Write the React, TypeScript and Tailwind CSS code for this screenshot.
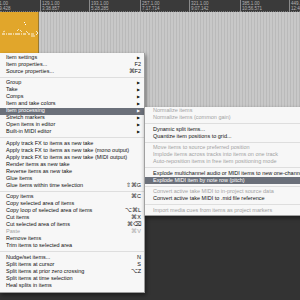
type Row =
  | { label: string; keys?: string; sub?: boolean; off?: boolean; hl?: boolean }
  | "sep";

const MAIN_ITEMS: Row[] = [
  { label: "Item settings", sub: true },
  { label: "Item properties...", keys: "F2" },
  { label: "Source properties...", keys: "⌘F2" },
  "sep",
  { label: "Group", sub: true },
  { label: "Take", sub: true },
  { label: "Comps", sub: true },
  { label: "Item and take colors", sub: true },
  { label: "Item processing", sub: true, hl: true },
  { label: "Stretch markers", sub: true },
  { label: "Open items in editor", sub: true },
  { label: "Built-in MIDI editor", sub: true },
  "sep",
  { label: "Apply track FX to items as new take" },
  { label: "Apply track FX to items as new take (mono output)" },
  { label: "Apply track FX to items as new take (MIDI output)" },
  { label: "Render items as new take" },
  { label: "Reverse items as new take" },
  { label: "Glue items" },
  { label: "Glue items within time selection", keys: "⇧⌘G" },
  "sep",
  { label: "Copy items", keys: "⌘C" },
  { label: "Copy selected area of items" },
  { label: "Copy loop of selected area of items", keys: "⌥⌘L" },
  { label: "Cut items", keys: "⌘X" },
  { label: "Cut selected area of items", keys: "⌘⌫" },
  { label: "Paste", keys: "⌘V", off: true },
  { label: "Remove items" },
  { label: "Trim items to selected area" },
  "sep",
  { label: "Nudge/set items...", keys: "N" },
  { label: "Split items at cursor", keys: "S" },
  { label: "Split items at prior zero crossing", keys: "⌥Z" },
  { label: "Split items at time selection" },
  { label: "Heal splits in items" },
];

const SUB_ITEMS: Row[] = [
  { label: "Normalize items", off: true },
  { label: "Normalize items (common gain)", off: true },
  "sep",
  { label: "Dynamic split items..." },
  { label: "Quantize item positions to grid..." },
  "sep",
  { label: "Move items to source preferred position", off: true },
  { label: "Implode items across tracks into items on one track", off: true },
  { label: "Auto-reposition items in free item positioning mode", off: true },
  "sep",
  { label: "Explode multichannel audio or MIDI items to new one-channel items" },
  { label: "Explode MIDI item by note row (pitch)", hl: true },
  "sep",
  { label: "Convert active take MIDI to in-project source data", off: true },
  { label: "Convert active take MIDI to .mid file reference" },
  "sep",
  { label: "Import media cues from items as project markers", off: true },
];

const RULER = [
  { x: -9, bar: "65.1.00", time: "1:49.428" },
  { x: 40, bar: "129.1.00", time: "3:38.857" },
  { x: 89, bar: "193.1.00", time: "5:28.285" },
  { x: 140, bar: "257.1.00", time: "7:17.714" },
  { x: 189, bar: "321.1.00", time: "9:07.142" },
  { x: 240, bar: "385.1.00", time: "10:56.571" },
  { x: 289, bar: "449.1.00", time: "12:46.000" },
];

function MenuRows({ rows, pl }: { rows: Row[]; pl: string }) {
  return (
    <>
      {rows.map((r, i) =>
        r === "sep" ? (
          <div key={i} className="h-[4.5px] flex items-center">
            <div className="h-px w-full bg-[#dedede]" />
          </div>
        ) : (
          <div
            key={i}
            className={`h-[7px] flex items-center whitespace-nowrap ${pl} pr-[3px] ${
              r.hl ? "bg-[#6b707a] text-white" : r.off ? "text-[#a3a3a3]" : "text-[#111111]"
            }`}
          >
            <span className="flex-1 leading-none">{r.label}</span>
            {r.keys && <span className="leading-none">{r.keys}</span>}
            {r.sub && <span className="text-[4px] leading-none pr-[1px]">▶</span>}
          </div>
        )
      )}
    </>
  );
}

export default function App() {
  return (
    <div
      className="relative w-[300px] h-[300px] overflow-hidden bg-[#333333]"
      style={{ fontFamily: '"Liberation Sans", Arial, sans-serif' }}
    >
      {/* Ruler */}
      <div className="relative h-[12px] bg-[#3a3a3a] border-b border-dotted border-[#7a7a7a] text-[#b4b4b4] text-[4.5px] leading-[5px]">
        {RULER.map((m) => (
          <div key={m.bar} className="absolute top-0 h-[12px] border-l border-[#8a8a8a] pl-[1px] pt-[1px]" style={{ left: m.x }}>
            <div>{m.bar}</div>
            <div>{m.time}</div>
          </div>
        ))}
      </div>

      {/* Track area */}
      <div className="h-[202px] bg-[repeating-linear-gradient(90deg,#c8c8c8_0px,#c8c8c8_2px,#bababa_2px,#bababa_3px)] flex">
        <div className="relative w-[39px] h-[90px] bg-[#e1a62b] border-r border-[#9a7a30]">
          <svg width="39" height="45" className="absolute left-0 top-0">
            <rect x="24" y="10" width="1" height="1" fill="#fff" />
            <rect x="25" y="12" width="1" height="1" fill="#fff" />
            <path d="M2 22h3M6 22h1M8 22h4M13 22h1M15 22h5M21 22h1M23 22h3M28 22h2" stroke="#fff" strokeWidth="1" />
            <path d="M3 20l2-1M17 19l2-2M20 18l2 2M26 19l2 2" stroke="#fff" strokeWidth="0.7" />
            <path d="M31 22h3M31 24h4" stroke="#fff" strokeWidth="0.8" />
            <path d="M36 19l2 2-2 2" stroke="#fff" strokeWidth="0.8" fill="none" />
          </svg>
        </div>
      </div>

      {/* Main context menu */}
      <div className="absolute left-0 top-[53px] w-[145px] bg-[#f7f7f7] border-r border-b border-[#9c9c9c] py-[1px] pb-[3px] text-[5.5px] shadow-[1px_2px_4px_rgba(0,0,0,0.45)]">
        <MenuRows rows={MAIN_ITEMS} pl="pl-[6px]" />
      </div>

      {/* Item processing submenu */}
      <div className="absolute left-[144px] top-[106.5px] w-[170px] bg-[#f7f7f7] border-l border-b border-[#a0a0a0] py-[1px] text-[5.5px] shadow-[1px_2px_4px_rgba(0,0,0,0.45)]">
        <MenuRows rows={SUB_ITEMS} pl="pl-[8px]" />
      </div>
    </div>
  );
}
